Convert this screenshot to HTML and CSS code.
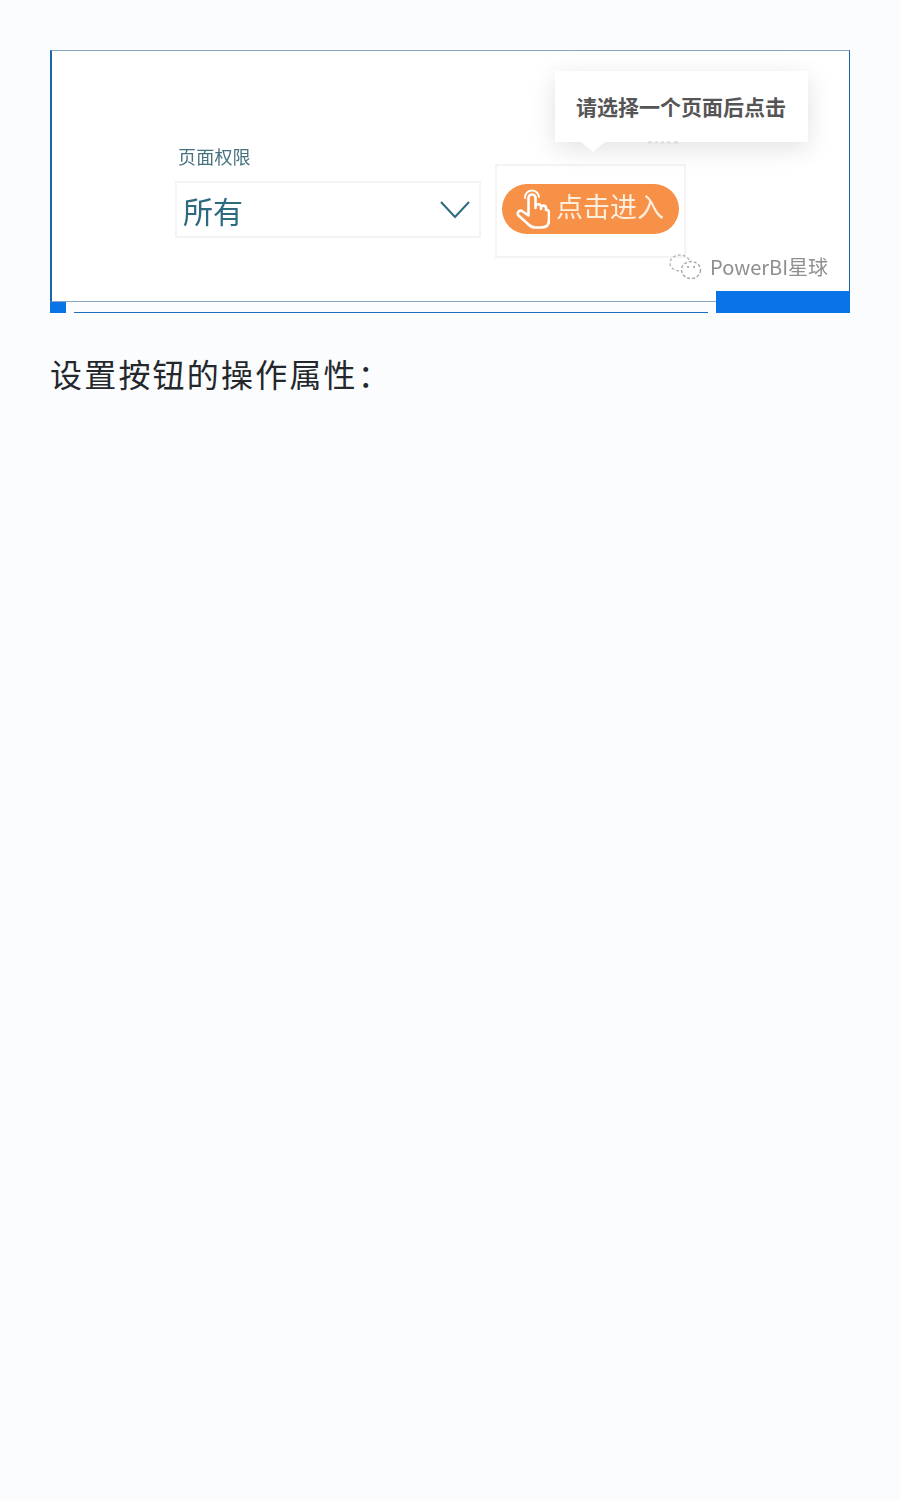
FILE: index.html
```html
<!DOCTYPE html>
<html>
<head>
  <meta charset="utf-8" />
  <meta name="viewport" content="width=device-width" />
  <title>设置按钮</title>
  <link rel="stylesheet" href="styles.css">
</head>

<body>
  <div class="shot">
    <div class="shot-panel">
      <div class="perm-field">
        <div class="perm-label">页面权限</div>
        <div class="perm-select">
          <span>所有</span>
          <svg class="perm-arrow" width="30" height="18" viewBox="0 0 30 18">
            <path d="M1 1 L15 16 L29 1" fill="none" stroke="#2f6b80" stroke-width="2" />
          </svg>
        </div>
      </div>

      <div class="enter-box">
        <div class="enter-btn">
          <svg class="enter-hand" width="34" height="40" viewBox="0 0 34 40">
            <path d="M12.500 25 L12.500 9 a3.500 3.500 0 0 1 7 0 L19.500 19 L19.500 17.500 a2.800 2.800 0 0 1 5.500 0 L25 20 L25 18.500 a2.600 2.600 0 0 1 5 0 L30 21 a2.300 2.300 0 0 1 3 2 L33 31 C33 36 30 38.500 25 38.500 L19 38.500 C16 38.500 14 37 12 35 L2.500 26.500 C0.500 24 3 20.500 6 22 L12.500 26.500" fill="none" stroke="#fff" stroke-width="2.600" stroke-linecap="round" stroke-linejoin="round" />
            <path d="M9 9 a7 7 0 0 1 14 -1" fill="none" stroke="#fff" stroke-width="2" stroke-linecap="round" />
          </svg>
          <span>点击进入</span>
        </div>
      </div>

      <div class="tip">请选择一个页面后点击</div>
      <div class="tip-dots"></div>

      <div class="mark">
        <svg width="34" height="28" viewBox="0 0 34 28">
          <ellipse cx="12" cy="10" rx="10" ry="8" fill="none" stroke="#bbb" stroke-width="1.500" stroke-dasharray="3 2" />
          <ellipse cx="23" cy="17" rx="9.500" ry="8.500" fill="#fff" stroke="#aaa" stroke-width="1.500" stroke-dasharray="3 2" />
          <circle cx="20" cy="14" r="1" fill="#999" />
          <circle cx="26" cy="14" r="1" fill="#999" />
        </svg>
        <span>PowerBI星球</span>
      </div>
    </div>

    <div class="shot-strip">
      <div class="strip-dot"></div>
      <div class="strip-line"></div>
    </div>
    <div class="strip-block"></div>
  </div>

  <p class="caption">设置按钮的操作属性：</p>
</body>
</html>
```

FILE: styles.css
```css
body {
  margin: 0;
  background-color: #fbfcfe;
  color: #24272b;
  font-family: "Noto Sans CJK SC", "Liberation Sans", sans-serif;
}

.shot {
  position: relative;
  width: 800px;
  margin: 50px 50px 0;
}

.shot-panel {
  position: relative;
  box-sizing: border-box;
  display: flex;
  align-items: flex-start;
  height: 252px;
  padding: 94px 0 0 123px;
  background-color: #fff;
  border: 1px solid #8aa6c6;
  border-left: 2px solid #1c65ad;
  border-right: 1px solid #1c65ad;
}

.perm-field {
  filter: blur(0.4px);
}

.perm-label {
  height: 36px;
  padding-left: 3px;
  font-size: 18px;
  line-height: 22px;
  letter-spacing: 0.2px;
  color: #46727f;
}

.perm-select {
  box-sizing: border-box;
  display: flex;
  align-items: center;
  justify-content: space-between;
  width: 306px;
  height: 57px;
  padding: 0 9px 0 6px;
  border: 2px solid #f3f4f4;
  font-size: 30px;
  color: #2c6a80;
}

.enter-box {
  box-sizing: border-box;
  width: 191px;
  height: 94px;
  margin: 19px 0 0 14px;
  padding: 18px 5px 0;
  border: 2px solid #f4f4f4;
  filter: blur(0.3px);
}

.enter-btn {
  display: flex;
  align-items: center;
  gap: 6px;
  width: 177px;
  height: 50px;
  padding-left: 14px;
  box-sizing: border-box;
  border-radius: 25px;
  background-color: #f69147;
  color: #fdeede;
  font-size: 27px;
  line-height: 1;
}

.enter-hand {
  flex: none;
}

.enter-btn span {
  margin-bottom: 8px;
}

.tip {
  position: absolute;
  left: 503px;
  top: 20px;
  box-sizing: border-box;
  width: 253px;
  height: 71px;
  padding: 19px 1px 0 0;
  text-align: center;
  font-size: 21px;
  font-weight: 700;
  line-height: 32px;
  color: #555;
  background-color: #fff;
  box-shadow: 0 6px 26px rgba(0, 0, 0, 0.12);
}

.tip::after {
  content: "";
  position: absolute;
  left: 26px;
  bottom: -10px;
  border-top: 10px solid #fff;
  border-left: 12px solid transparent;
  border-right: 12px solid transparent;
}

.tip-dots {
  position: absolute;
  left: 596px;
  top: 90px;
  width: 30px;
  border-top: 3px dotted #e2e2e2;
  filter: blur(0.6px);
}

.mark {
  position: absolute;
  right: 21px;
  top: 202px;
  display: flex;
  align-items: center;
  gap: 8px;
  font-size: 20px;
  line-height: 28px;
  color: #8f8f8f;
  filter: blur(0.5px);
}

.shot-strip {
  display: flex;
  align-items: flex-end;
  height: 11px;
}

.strip-dot {
  width: 16px;
  height: 11px;
  margin-right: 8px;
  background-color: #0b73e8;
}

.strip-line {
  width: 634px;
  height: 1px;
  background-color: #1c6fbf;
}

.strip-block {
  position: absolute;
  right: 0;
  bottom: 0;
  width: 134px;
  height: 22px;
  background-color: #0b73e8;
}

.caption {
  margin: 38px 0 0 50px;
  font-size: 32px;
  line-height: 44px;
  letter-spacing: 2.2px;
}
```
